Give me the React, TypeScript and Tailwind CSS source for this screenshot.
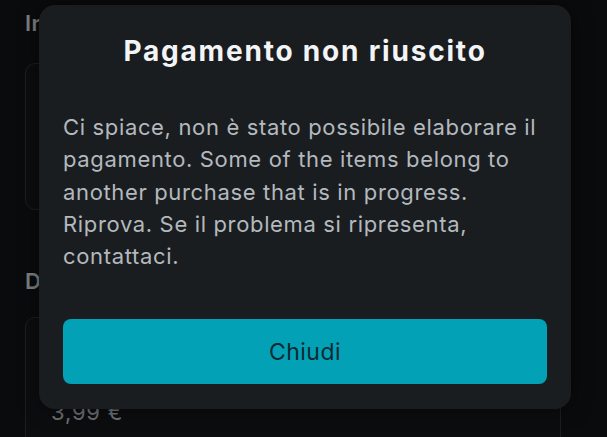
import React from 'react';

const font = { fontFamily: 'Inter, "Noto Sans", sans-serif' };

export default function App() {
  return (
    <div className="relative w-[607px] h-[437px] overflow-hidden bg-[#0a0b0c]" style={font}>
      {/* page behind the modal */}
      <div className="flex flex-col px-[25px] pt-[9px] w-[586px]">
        <h2 className="text-[22px] leading-[28px] font-semibold tracking-[0.5px] text-[#7d8185]">Informazioni</h2>
        <div className="mt-[26px] h-[147px] rounded-[10px] border border-[#1c1f22] bg-[#0c0d0f]" />
        <h2 className="mt-[57px] text-[22px] leading-[28px] font-semibold tracking-[0.5px] text-[#7d8185]">Dettagli</h2>
        <div className="mt-[22px] h-[140px] rounded-[10px] border border-[#1c1f22] bg-[#0c0d0f] px-[25px] pt-[78px]">
          <p className="text-[22px] tracking-[0.8px] text-[#6f7377]">3,99 €</p>
        </div>
      </div>

      {/* modal */}
      <div className="absolute left-[39px] top-[5px] w-[532px] h-[404px] rounded-[16px] bg-[#1a1d20] px-[24px] pt-[29px] flex flex-col shadow-[0_0_20px_rgba(0,0,0,0.5)]">
        <h1 className="text-center text-[28px] leading-[34px] font-bold tracking-[1.8px] text-[#f3f4f5]">
          Pagamento non riuscito
        </h1>
        <p className="mt-[43px] text-[22px] leading-[32.3px] tracking-[0.65px] text-[#b3b9be]">
          Ci spiace, non è stato possibile elaborare il pagamento. Some of the items belong to another purchase that is in progress. Riprova. Se il problema si ripresenta, contattaci.
        </p>
        <button className="mt-[47px] h-[65px] w-full rounded-[8px] bg-[#03a1b5] text-[23px] tracking-[0.5px] text-[#0e2a32]">
          Chiudi
        </button>
      </div>
    </div>
  );
}
